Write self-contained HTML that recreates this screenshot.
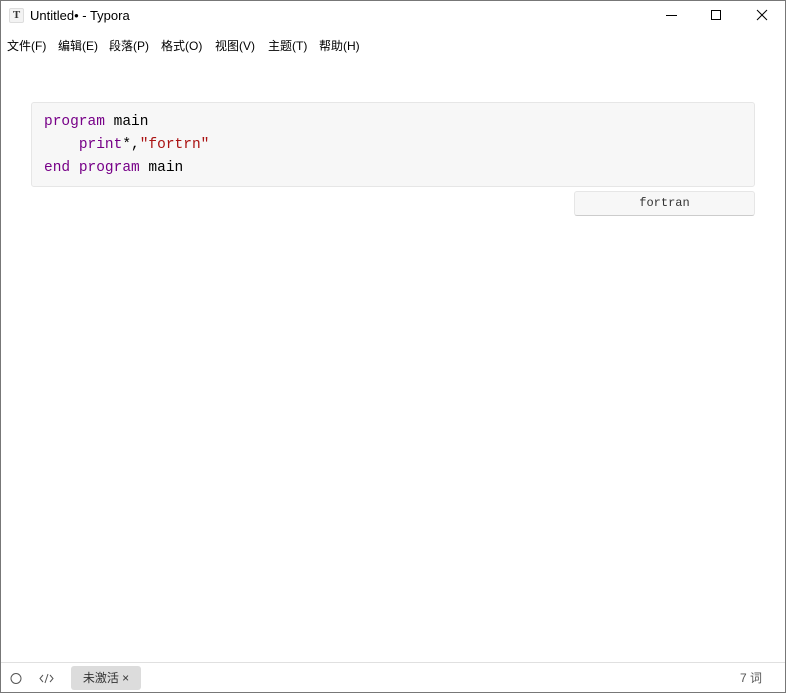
<!DOCTYPE html>
<html><head><meta charset="utf-8"><style>
*{margin:0;padding:0;box-sizing:border-box}
body{width:786px;height:693px;overflow:hidden;background:#fff;font-family:"Liberation Sans","Noto Sans CJK SC",sans-serif;position:relative}
.frame{position:absolute;inset:0;border:1px solid #777;}
.title{position:absolute;left:30px;top:8px;font-size:13px;color:#000}
.ticon{position:absolute;left:9px;top:8px;width:15px;height:15px;border:1px solid #ddd;border-radius:2px;background:#f3f3f3;font:bold 11px "Liberation Serif",serif;text-align:center;line-height:13px;color:#333}
.menu span{position:absolute;top:37px;font-size:12px;color:#000;white-space:pre}
.code{position:absolute;left:31px;top:102px;width:724px;height:85px;background:#f7f7f7;border:1px solid #e6e6e6;border-radius:3px;font-family:"Liberation Mono",monospace;font-size:14.5px;line-height:23px;padding:8px 0 0 12px;white-space:pre;color:#000}
.k{color:#770088}.s{color:#aa1111}
.lang{position:absolute;left:574px;top:191px;width:181px;height:25px;background:#f7f7f7;border:1px solid #e6e6e6;border-bottom-color:#ccc;border-radius:3px;font-family:"Liberation Mono",monospace;font-size:12px;text-align:center;line-height:23px;color:#333}
.sb{position:absolute;left:1px;right:1px;top:662px;height:1px;background:#e0e0e0}
.tag{position:absolute;left:71px;top:666px;width:70px;height:24px;background:#dcdcdc;border-radius:3px;font-size:12px;color:#333;line-height:24px;text-align:center}
</style></head><body>
<div class="frame"></div>
<div class="ticon">T</div>
<div class="title">Untitled• - Typora</div>
<svg style="position:absolute;left:660px;top:5px" width="120" height="22" fill="none" stroke="#000" stroke-width="1">
<line x1="6" y1="10.5" x2="17" y2="10.5"/>
<rect x="51.5" y="5.5" width="9" height="9"/>
<path d="M97 5L107 15M107 5L97 15"/>
</svg>
<div class="menu"><span style="left:7px">文件(F)</span><span style="left:58px">编辑(E)</span><span style="left:109px">段落(P)</span><span style="left:161px">格式(O)</span><span style="left:215px">视图(V)</span><span style="left:268px">主题(T)</span><span style="left:319px">帮助(H)</span></div>
<div class="code"><span class="k">program</span> main
    <span class="k">print</span>*,<span class="s">"fortrn"</span>
<span class="k">end</span> <span class="k">program</span> main</div>
<div class="lang">fortran</div>
<div class="sb"></div>
<svg style="position:absolute;left:8px;top:670px" width="60" height="16" fill="none" stroke="#555" stroke-width="1">
<circle cx="8" cy="8.5" r="5"/>
<path d="M35 5L32 8.5L35 12M42 5L45 8.5L42 12M40 4L37 13"/>
</svg>
<div class="tag">未激活 ×</div>
<div style="position:absolute;left:740px;top:669px;font-size:12px;color:#555">7 词</div>
</body></html>
